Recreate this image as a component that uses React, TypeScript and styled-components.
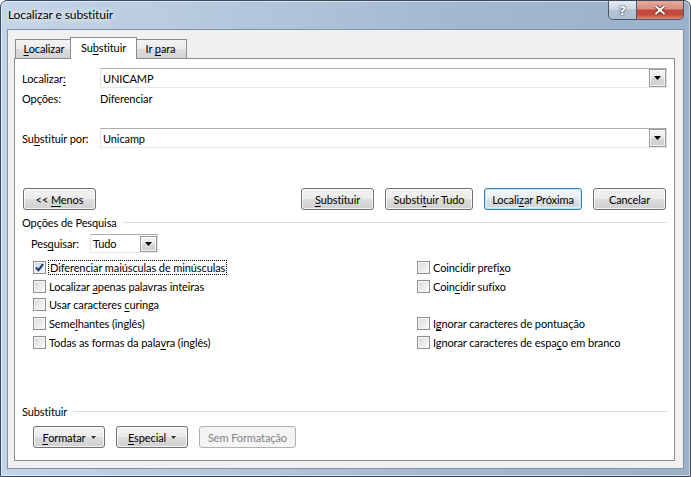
import React from 'react';
import styled, { createGlobalStyle, css } from 'styled-components';

const GlobalStyle = createGlobalStyle`
  html, body { margin: 0; padding: 0; background: #fff; }
  body {
    font-family: Lato, "Liberation Sans", sans-serif;
    font-size: 11px;
    letter-spacing: -0.1px;
    color: #000;
  }
  * { box-sizing: border-box; }
  u { text-decoration: underline; text-underline-offset: 2px; }
`;

const Window = styled.div`
  width: 691px;
  height: 477px;
  display: flex;
  flex-direction: column;
  padding: 0 7px 8px 7px;
  border: 1px solid #3a4b5f;
  border-radius: 7px 7px 0 0;
  background: linear-gradient(to right, #c4d5e7 0%, #b3c7dc 35%, #a3b9d0 65%, #9ab1c9 100%);
  box-shadow: inset 0 0 0 1px rgba(255, 255, 255, 0.5);
`;

const TitleBar = styled.div`
  height: 29px;
  display: flex;
  align-items: flex-start;
`;

const Title = styled.div`
  flex: 1;
  line-height: 28px;
  font-size: 12px;
  color: #000;
  text-shadow: 0 0 8px #fff, 0 0 4px rgba(255, 255, 255, 0.9);
`;

const CaptionButton = styled.div<{ $close?: boolean }>`
  height: 19px;
  display: flex;
  align-items: center;
  justify-content: center;
  border: 1px solid #4a5a6c;
  border-top: none;
  color: #fff;
  font-family: "DejaVu Sans", sans-serif;
  font-weight: bold;
  ${(p) =>
    p.$close
      ? css`
          width: 47px;
          margin-right: -1px;
          border-left: none;
          border-radius: 0 0 5px 0;
          background: linear-gradient(#e9a99b 0%, #d78d80 45%, #c2463a 50%, #c24b3c 75%, #dc8a6f 100%);
        `
      : css`
          width: 29px;
          border-radius: 0 0 0 5px;
          background: linear-gradient(#e6edf4 0%, #cdd8e4 45%, #b5c4d5 50%, #aebfd2 100%);
          font-size: 13px;
          text-shadow: 0 0 2px #2c3b4c, 0 0 1px #2c3b4c;
        `}
`;

const Client = styled.div`
  flex: 1;
  display: flex;
  flex-direction: column;
  background: #f0f0f0;
  padding: 7px 8px 7px 6px;
  box-shadow: 0 0 0 1px #7e93aa;
`;

const TabStrip = styled.div`
  height: 21px;
  display: flex;
  align-items: flex-end;
  padding-left: 2px;
  position: relative;
  z-index: 1;
`;

const Tab = styled.div<{ $w: number; $active?: boolean }>`
  width: ${(p) => p.$w}px;
  height: 19px;
  line-height: 17px;
  text-align: center;
  border: 1px solid #898c95;
  border-bottom: none;
  margin-left: -1px;
  background: linear-gradient(#f3f3f3 0%, #ebebeb 50%, #dddddd 50%, #d3d3d3 100%);
  position: relative;
  ${(p) =>
    p.$active &&
    css`
      width: ${p.$w + 4}px;
      height: 22px;
      line-height: 19px;
      margin: 0 -2px -1px -3px;
      background: #fff;
      z-index: 2;
    `}
`;

const Panel = styled.div`
  flex: 1;
  display: flex;
  flex-direction: column;
  background: #fff;
  border: 1px solid #898c95;
  padding: 9px 7px 12px 7px;
`;

const FieldRow = styled.div<{ $mt?: number }>`
  display: grid;
  grid-template-columns: 78px 1fr;
  align-items: center;
  height: 20px;
  margin-top: ${(p) => p.$mt ?? 0}px;
`;

const Combo = styled.div<{ $w?: number }>`
  height: ${(p) => (p.$w ? 19 : 20)}px;
  ${(p) => p.$w && css`width: ${p.$w}px;`}
  display: flex;
  align-items: center;
  padding-left: 2px;
  border: 1px solid;
  border-color: #abadb3 #dbdfe6 #e3e9ef #e2e3ea;
  background: #fff;
`;

const DropButton = styled.div<{ $h?: number }>`
  margin-left: auto;
  width: 17px;
  height: ${(p) => p.$h ?? 18}px;
  display: flex;
  align-items: center;
  justify-content: center;
  border: 1px solid #9a9a9a;
  background: linear-gradient(#f6f6f6 0%, #e8e8e8 50%, #d8d8d8 51%, #cfcfcf 100%);
  box-shadow: inset 0 0 0 1px rgba(255, 255, 255, 0.7);
`;

const ButtonRow = styled.div<{ $mt: number; $pl?: number }>`
  display: flex;
  justify-content: space-between;
  margin-top: ${(p) => p.$mt}px;
  padding: 0 1px 0 ${(p) => p.$pl ?? 1}px;
`;

const ButtonGroup = styled.div<{ $gap: number }>`
  display: flex;
  gap: ${(p) => p.$gap}px;
`;

const Button = styled.div<{ $w: number; $h?: number; $primary?: boolean; $disabled?: boolean }>`
  width: ${(p) => p.$w}px;
  height: ${(p) => p.$h ?? 22}px;
  display: flex;
  align-items: center;
  justify-content: center;
  gap: 5px;
  border: 1px solid #707070;
  border-radius: 3px;
  background: linear-gradient(#f2f2f2 0%, #ebebeb 50%, #dddddd 51%, #cfcfcf 100%);
  box-shadow: inset 0 0 0 1px rgba(255, 255, 255, 0.75);
  ${(p) =>
    p.$primary &&
    css`
      border-color: #3c7fb1;
      box-shadow: inset 0 0 0 1px #bde4f6, inset 0 0 0 2px rgba(255, 255, 255, 0.5);
      background: linear-gradient(#f3f6f8 0%, #eaeef1 50%, #dbe1e5 51%, #ced6dc 100%);
    `}
  ${(p) =>
    p.$disabled &&
    css`
      border-color: #adb2b5;
      background: #f4f4f4;
      box-shadow: none;
      color: #838383;
    `}
`;

const GroupHeader = styled.div<{ $mt: number }>`
  height: 20px;
  display: flex;
  align-items: center;
  gap: 6px;
  margin-top: ${(p) => p.$mt}px;
  &::after {
    content: '';
    flex: 1;
    height: 1px;
    background: #dcdcdc;
  }
`;

const SearchRow = styled.div`
  display: flex;
  align-items: center;
  height: 19px;
  margin-top: 2px;
  padding-left: 9px;
`;

const SearchLabel = styled.span`
  width: 59px;
`;

const OptionGrid = styled.div`
  display: grid;
  grid-template-columns: 384px 1fr;
  grid-auto-flow: column;
  grid-template-rows: repeat(5, 18.75px);
  margin-top: 5px;
  padding-left: 11px;
`;

const Option = styled.label`
  display: flex;
  align-items: center;
  gap: 3px;
`;

const Box = styled.span<{ $checked?: boolean }>`
  width: 13px;
  height: 13px;
  flex: none;
  display: flex;
  align-items: center;
  justify-content: center;
  border: 1px solid #8e8f8f;
  background: linear-gradient(135deg, #d8d8d8 0%, #eeeeee 60%, #fbfbfb 100%);
  box-shadow: inset 0 0 0 1px #f6f6f6;
  ${(p) =>
    p.$checked &&
    css`
      background: linear-gradient(135deg, #c4d3e4 0%, #e3ebf4 60%, #f6f9fc 100%);
    `}
`;

const Focused = styled.span`
  outline: 1px dotted #000;
  outline-offset: 0;
  padding: 0 1px;
`;

const Spacer = styled.div`
  flex: 1;
`;

const Arrow = () => (
  <svg width="7" height="4" viewBox="0 0 7 4">
    <polygon points="0,0 7,0 3.5,4" fill="#000" />
  </svg>
);

const SmallArrow = () => (
  <svg width="5" height="3" viewBox="0 0 5 3">
    <polygon points="0,0 5,0 2.5,3" fill="#333" />
  </svg>
);

const Check = () => (
  <svg width="11" height="11" viewBox="0 0 11 11">
    <path d="M2 5.5 L4.5 8.2 L9 2.2" fill="none" stroke="#1f3775" strokeWidth="2.1" />
  </svg>
);

type Opt = { label: React.ReactNode; checked?: boolean; focus?: boolean } | null;

const options: Opt[] = [
  { label: <>Diferenciar maiúsculas de minúsculas</>, checked: true, focus: true },
  { label: <>Localizar <u>a</u>penas palavras inteiras</> },
  { label: <>Usar caracteres <u>c</u>uringa</> },
  { label: <>Seme<u>l</u>hantes (inglês)</> },
  { label: <>Todas as formas da pala<u>v</u>ra (inglês)</> },
  { label: <>Coincidir prefi<u>x</u>o</> },
  { label: <>Coin<u>c</u>idir sufixo</> },
  null,
  { label: <>I<u>g</u>norar caracteres de pontuação</> },
  { label: <>Ignorar caracteres de espa<u>ç</u>o em branco</> },
];

export default function App() {
  return (
    <>
      <GlobalStyle />
      <Window>
        <TitleBar>
          <Title>Localizar e substituir</Title>
          <CaptionButton>?</CaptionButton>
          <CaptionButton $close>
            <svg width="12" height="10" viewBox="0 0 12 10">
              <path d="M1.5 1 L10.5 9 M10.5 1 L1.5 9" stroke="#5a1b14" strokeWidth="3.6" />
              <path d="M1.5 1 L10.5 9 M10.5 1 L1.5 9" stroke="#fff" strokeWidth="2.2" />
            </svg>
          </CaptionButton>
        </TitleBar>
        <Client>
          <TabStrip>
            <Tab $w={58}><u>L</u>ocalizar</Tab>
            <Tab $w={63} $active>Su<u>b</u>stituir</Tab>
            <Tab $w={53}>Ir <u>p</u>ara</Tab>
          </TabStrip>
          <Panel>
            <FieldRow>
              <span>Localizar<u>:</u></span>
              <Combo>
                UNICAMP
                <DropButton><Arrow /></DropButton>
              </Combo>
            </FieldRow>
            <FieldRow>
              <span>Opções:</span>
              <span>Diferenciar</span>
            </FieldRow>
            <FieldRow $mt={20}>
              <span>Su<u>b</u>stituir por:</span>
              <Combo>
                Unicamp
                <DropButton><Arrow /></DropButton>
              </Combo>
            </FieldRow>
            <ButtonRow $mt={40}>
              <Button $w={73}><span>&lt;&lt; <u>M</u>enos</span></Button>
              <ButtonGroup $gap={11}>
                <Button $w={73}><span><u>S</u>ubstituir</span></Button>
                <Button $w={88}><span>Substi<u>t</u>uir Tudo</span></Button>
                <Button $w={98} $primary><span>Locali<u>z</u>ar Próxima</span></Button>
                <Button $w={73}><span>Cancelar</span></Button>
              </ButtonGroup>
            </ButtonRow>
            <GroupHeader $mt={2}>Opções de Pesquisa</GroupHeader>
            <SearchRow>
              <SearchLabel>Pes<u>q</u>uisar:</SearchLabel>
              <Combo $w={68}>
                Tudo
                <DropButton $h={16}><Arrow /></DropButton>
              </Combo>
            </SearchRow>
            <OptionGrid>
              {options.map((o, i) =>
                o ? (
                  <Option key={i}>
                    <Box $checked={o.checked}>{o.checked && <Check />}</Box>
                    {o.focus ? <Focused>{o.label}</Focused> : <span>{o.label}</span>}
                  </Option>
                ) : (
                  <span key={i} />
                )
              )}
            </OptionGrid>
            <Spacer />
            <GroupHeader $mt={0}>Substituir</GroupHeader>
            <ButtonRow $mt={5} $pl={11}>
              <ButtonGroup $gap={11}>
                <Button $w={72}><span><u>F</u>ormatar</span><SmallArrow /></Button>
                <Button $w={72}><span><u>E</u>special</span><SmallArrow /></Button>
                <Button $w={97} $disabled><span>Sem Formatação</span></Button>
              </ButtonGroup>
            </ButtonRow>
          </Panel>
        </Client>
      </Window>
    </>
  );
}
